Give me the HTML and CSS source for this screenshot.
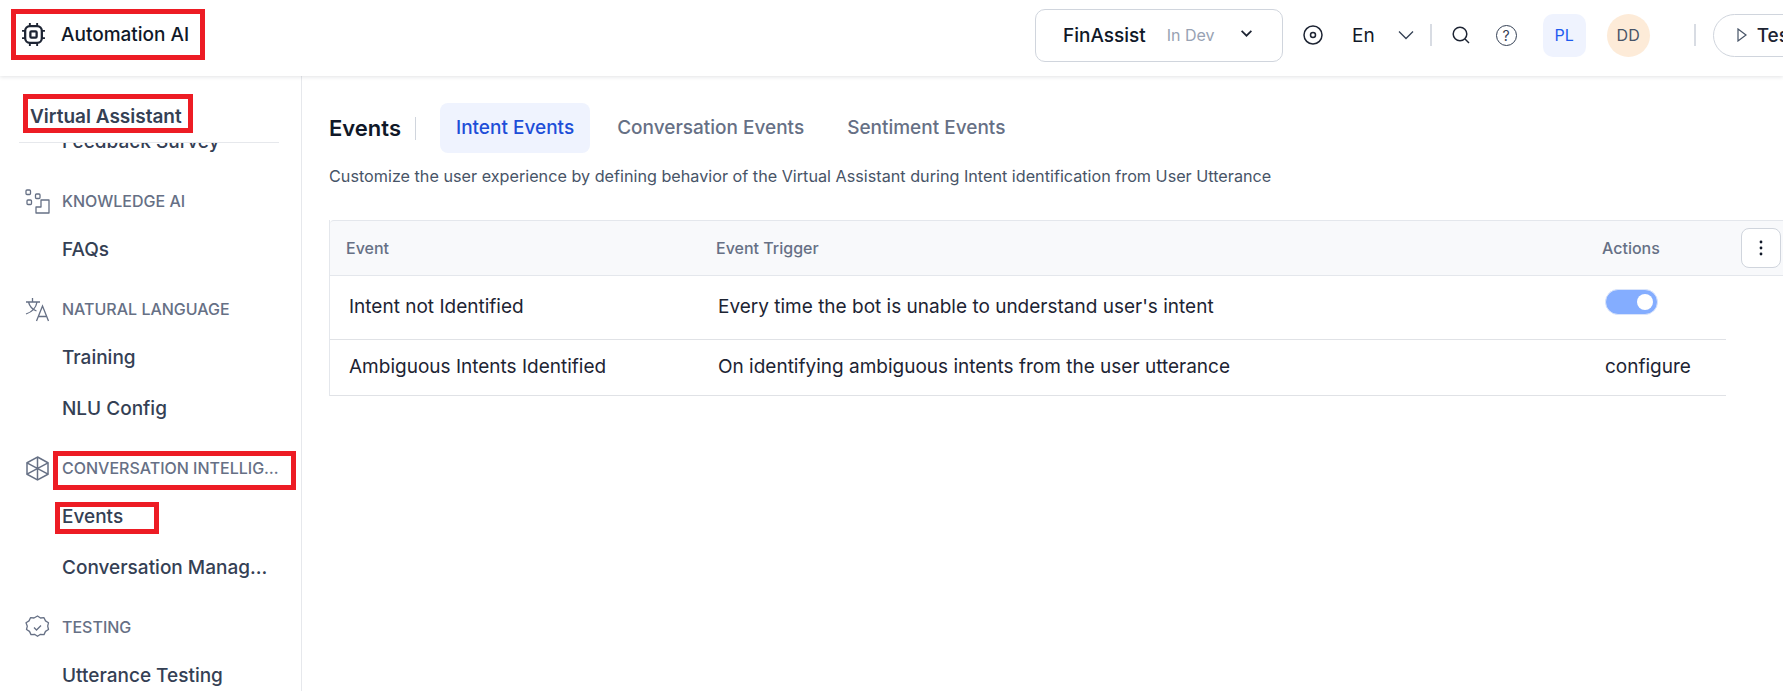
FILE: index.html
```html
<!DOCTYPE html>
<html lang="en">
<head>
    <meta charset="UTF-8">
    <meta name="viewport" content="width=device-width, initial-scale=1.0">
    <title>Automation AI - Events</title>
    <link rel="stylesheet" href="styles.css">
</head>
<body>
    <header class="topbar">
        <div class="brand">
            <svg class="brand-icon" viewBox="0 0 24 24" fill="none" stroke="#1d2433" stroke-width="2.200">
                <rect x="4" y="4" width="16" height="16" rx="4.500"/>
                <rect x="9" y="9" width="6" height="6" rx="1"/>
                <path d="M8.500 1v3M15.500 1v3M8.500 20v3M15.500 20v3M1 8.500h3M1 15.500h3M20 8.500h3M20 15.500h3" stroke-width="1.800"/>
            </svg>
            <span>Automation AI</span>
        </div>
        <div class="top-actions">
            <div class="app-select">
                <span class="app-name">FinAssist</span>
                <span class="app-state">In Dev</span>
                <svg class="chev-small" viewBox="0 0 12 8" fill="none" stroke="#1d2433" stroke-width="1.600"><path d="M1.500 1.500 6 6l4.500-4.500"/></svg>
            </div>
            <svg class="icon-disc" viewBox="0 0 20 20" fill="none" stroke="#1d2433" stroke-width="1.500">
                <circle cx="10" cy="10" r="9"/>
                <circle cx="10" cy="10" r="2.500"/>
            </svg>
            <span class="lang">En</span>
            <svg class="chev-lang" viewBox="0 0 16 10" fill="none" stroke="#344054" stroke-width="1.300"><path d="M1 1.500l7 7 7-7"/></svg>
            <span class="sep sep-lang"></span>
            <svg class="icon-search" viewBox="0 0 18 18" fill="none" stroke="#1d2433" stroke-width="1.500">
                <circle cx="8" cy="8" r="6.800"/>
                <path d="M13 13l4 4"/>
            </svg>
            <span class="icon-help">?</span>
            <span class="badge-pl">PL</span>
            <span class="badge-dd">DD</span>
            <span class="sep sep-test"></span>
            <button class="test-btn">
                <svg viewBox="0 0 10 14" fill="none" stroke="#475467" stroke-width="1.200"><path d="M1 1l8 6-8 6z"/></svg>
                Test
            </button>
        </div>
    </header>

    <div class="layout">
        <aside class="sidebar">
            <div class="side-head">Virtual Assistant</div>
            <nav class="side-nav">
                <a class="nav-item nav-first">Feedback Survey</a>

                <div class="nav-label">
                    <svg viewBox="0 0 25 25" fill="none" stroke="#667085" stroke-width="1.300">
                        <rect x="1" y="1" width="4.500" height="4.500" rx="1"/>
                        <rect x="10.500" y="5" width="4.500" height="4.500" rx="1"/>
                        <rect x="2" y="11" width="4.500" height="4.500" rx="1"/>
                        <path d="M11 24v-6h5v-7h8v13z" stroke-linejoin="round"/>
                    </svg>
                    <span>KNOWLEDGE AI</span>
                </div>
                <a class="nav-item">FAQs</a>

                <div class="nav-label">
                    <svg viewBox="0 0 25 25" fill="none" stroke="#667085" stroke-width="1.300">
                        <path d="M1 5h14M7.500 1v4M12 5c-1 6-5 10-11 12M3.500 5c1 4 4 7.500 8 9"/>
                        <path d="M11.500 24l6-15 6 15M13.500 19.500h8"/>
                    </svg>
                    <span>NATURAL LANGUAGE</span>
                </div>
                <a class="nav-item">Training</a>
                <a class="nav-item">NLU Config</a>

                <div class="nav-label">
                    <svg viewBox="0 0 25 25" fill="none" stroke="#667085" stroke-width="1.500">
                        <path d="M12.500 1l10.500 5.800v11.400L12.500 24 2 18.200V6.800z"/>
                        <path d="M12.500 1v23M2 6.800l21 11.400M23 6.800L2 18.200"/>
                    </svg>
                    <span class="nav-label-text">CONVERSATION INTELLIGENCE</span>
                </div>
                <a class="nav-item nav-active">Events</a>
                <a class="nav-item">Conversation Management</a>

                <div class="nav-label">
                    <svg viewBox="0 0 25 25" fill="none" stroke="#667085" stroke-width="1.300">
                        <path d="M12.500 1l3 2 3.500-.3 1.500 3.200 3 1.800-.8 3.500.8 3.300-3 1.900-1.500 3.200-3.500-.3-3 2-3-2-3.500.3-1.500-3.200-3-1.900.8-3.300L1 7.700l3-1.800 1.500-3.200L9 3z" stroke-linejoin="round"/>
                        <path d="M9 12.500l2.500 2.500 4.500-4.500"/>
                    </svg>
                    <span>TESTING</span>
                </div>
                <a class="nav-item">Utterance Testing</a>
            </nav>
        </aside>

        <main class="content">
            <div class="tabs-row">
                <h1 class="page-title">Events</h1>
                <span class="title-sep"></span>
                <a class="tab tab-active">Intent Events</a>
                <a class="tab">Conversation Events</a>
                <a class="tab">Sentiment Events</a>
            </div>
            <p class="page-desc">Customize the user experience by defining behavior of the Virtual Assistant during Intent identification from User Utterance</p>

            <div class="table-wrap">
                <div class="table-head">
                    <span class="col-event">Event</span>
                    <span class="col-trigger">Event Trigger</span>
                    <span class="col-actions">Actions</span>
                    <button class="more-btn">
                        <svg viewBox="0 0 4 16" fill="#101828"><circle cx="2" cy="2" r="1.400"/><circle cx="2" cy="8" r="1.400"/><circle cx="2" cy="14" r="1.400"/></svg>
                    </button>
                </div>
                <div class="table-row">
                    <span class="col-event">Intent not Identified</span>
                    <span class="col-trigger">Every time the bot is unable to understand user's intent</span>
                    <span class="col-actions"><span class="toggle"><span class="toggle-knob"></span></span></span>
                </div>
                <div class="table-row row-short">
                    <span class="col-event">Ambiguous Intents Identified</span>
                    <span class="col-trigger">On identifying ambiguous intents from the user utterance</span>
                    <span class="col-actions">configure</span>
                </div>
            </div>
        </main>
    </div>

    <!-- red highlight boxes drawn on top of the screenshot -->
    <div class="mark mark-brand"></div>
    <div class="mark mark-head"></div>
    <div class="mark mark-conv"></div>
    <div class="mark mark-events"></div>
</body>
</html>
```

FILE: styles.css
```css
html, body {
    margin: 0;
    padding: 0;
    height: 100%;
    overflow: hidden;
    background-color: white;
    font-family: Inter, "Noto Sans", sans-serif;
    color: #101828;
}

.topbar {
    height: 76px;
    box-sizing: border-box;
    padding-bottom: 6px;
    display: flex;
    align-items: center;
    background-color: white;
    box-shadow: 0 1px 4px rgba(16, 24, 40, 0.12);
    position: relative;
    z-index: 2;
}

.brand {
    width: 1035px;
    flex: none;
    display: flex;
    align-items: center;
    padding-left: 21px;
    box-sizing: border-box;
    font-size: 19px;
    font-weight: 500;
    margin-top: -2px;
}

.brand-icon {
    width: 25px;
    height: 25px;
    margin-right: 15px;
}

.top-actions {
    flex: none;
    display: flex;
    align-items: center;
}

.app-select {
    width: 248px;
    height: 53px;
    box-sizing: border-box;
    border: 1px solid #d0d5dd;
    border-radius: 10px;
    display: flex;
    align-items: center;
    padding-left: 27px;
}

.app-name {
    font-size: 19px;
    font-weight: 500;
}

.app-state {
    font-size: 16px;
    color: #98a2b3;
    margin-left: 21px;
}

.chev-small {
    width: 13px;
    height: 9px;
    margin-left: 25px;
    margin-top: -4px;
}

.icon-disc {
    width: 20px;
    height: 20px;
    margin-left: 20px;
}

.lang {
    font-size: 19px;
    margin-left: 29px;
}

.chev-lang {
    width: 16px;
    height: 10px;
    margin-left: 23px;
}

.sep {
    width: 2px;
    height: 22px;
    background-color: #d8dce3;
}

.sep-lang {
    margin-left: 16px;
}

.icon-search {
    width: 18px;
    height: 18px;
    margin-left: 20px;
}

.icon-help {
    width: 19px;
    height: 19px;
    margin-left: 26px;
    border: 1.500px solid #344054;
    border-radius: 50%;
    font-size: 14px;
    line-height: 19px;
    text-align: center;
    color: #344054;
}

.badge-pl, .badge-dd {
    width: 43px;
    height: 43px;
    display: flex;
    align-items: center;
    justify-content: center;
    font-size: 16px;
    font-weight: 400;
}

.badge-pl {
    margin-left: 26px;
    border-radius: 10px;
    background-color: #eff3fe;
    color: #1d5bf0;
}

.badge-dd {
    margin-left: 21px;
    border-radius: 50%;
    background-color: #fdebd8;
    color: #475467;
}

.sep-test {
    margin-left: 44px;
}

.test-btn {
    flex: none;
    width: 130px;
    height: 43px;
    margin-left: 17px;
    padding: 0 0 0 23px;
    box-sizing: border-box;
    border: 1px solid #d0d5dd;
    border-radius: 22px;
    background-color: white;
    display: flex;
    align-items: center;
    gap: 10px;
    font-family: inherit;
    font-size: 19px;
    font-weight: 500;
    color: #1d2433;
}

.test-btn svg {
    width: 10px;
    height: 14px;
}

.layout {
    display: flex;
    height: calc(100% - 76px);
}

.sidebar {
    width: 302px;
    flex: none;
    box-sizing: border-box;
    border-right: 1px solid #e6e8ec;
    display: flex;
    flex-direction: column;
    overflow: hidden;
}

.side-head {
    height: 67px;
    margin: 0 22px 0 19px;
    padding: 28px 0 0 11px;
    box-sizing: border-box;
    border-bottom: 1px solid #e6e8ec;
    font-size: 19px;
    line-height: 26px;
    font-weight: 600;
    color: #344054;
    background-color: white;
    position: relative;
    flex: none;
}

.side-nav {
    flex: 1;
    overflow: hidden;
}

.nav-item {
    display: block;
    height: 51px;
    line-height: 51px;
    margin-left: 62px;
    width: 206px;
    font-size: 19px;
    font-weight: 500;
    color: #344054;
    white-space: nowrap;
    overflow: hidden;
    text-overflow: ellipsis;
}

.nav-first {
    margin-top: -27px;
}

.nav-label {
    height: 46px;
    margin-top: 11px;
    padding-left: 25px;
    display: flex;
    align-items: center;
    gap: 12px;
    font-size: 16px;
    font-weight: 500;
    color: #667085;
    white-space: nowrap;
}

.nav-label svg {
    width: 25px;
    height: 25px;
    flex: none;
}

.nav-label-text {
    width: 218px;
    overflow: hidden;
    text-overflow: ellipsis;
}

.content {
    flex: 1;
    min-width: 0;
    padding: 27px 0 0 27px;
}

.tabs-row {
    display: flex;
    align-items: center;
    height: 50px;
}

.page-title {
    margin: 0;
    font-size: 22px;
    font-weight: 600;
    color: #101828;
}

.title-sep {
    width: 1px;
    height: 23px;
    margin-left: 14px;
    background-color: #d0d5dd;
}

.tab {
    height: 50px;
    line-height: 50px;
    padding: 0 16px;
    font-size: 19px;
    font-weight: 500;
    color: #667085;
    border-radius: 8px;
    margin-right: 11px;
}

.tab-active {
    margin-left: 24px;
    margin-right: 11px;
    background-color: #eff3fe;
    color: #1d4ed8;
}

.page-desc {
    margin: 11px 0 0;
    height: 25px;
    line-height: 25px;
    font-size: 16.200px;
    color: #475467;
}

.table-wrap {
    margin-top: 31px;
    border-left: 1px solid #e4e7ec;
}

.table-head {
    height: 56px;
    box-sizing: border-box;
    border-top: 1px solid #e4e7ec;
    border-bottom: 1px solid #e4e7ec;
    border-radius: 4px 0 0 0;
    background-color: #f8f9fb;
    display: flex;
    align-items: center;
    font-size: 16px;
    font-weight: 500;
    color: #667085;
    padding-left: 16px;
}

.table-head .col-event {
    width: 370px;
    flex: none;
}

.table-head .col-trigger {
    width: 886px;
    flex: none;
}

.table-head .col-actions {
    width: 139px;
    flex: none;
}

.more-btn {
    width: 40px;
    height: 40px;
    padding: 0;
    flex: none;
    border: 1px solid #d0d5dd;
    border-radius: 8px;
    background-color: white;
    display: flex;
    align-items: center;
    justify-content: center;
}

.more-btn svg {
    width: 4px;
    height: 16px;
}

.table-row {
    width: 1396px;
    height: 64px;
    box-sizing: border-box;
    border-bottom: 1px solid #e0e2e6;
    padding-bottom: 2px;
    display: flex;
    align-items: center;
    padding-left: 19px;
    font-size: 19px;
    color: #1d2433;
}

.row-short {
    height: 56px;
}

.table-row .col-event {
    width: 369px;
    flex: none;
}

.table-row .col-trigger {
    width: 887px;
    flex: none;
}

.toggle {
    display: block;
    width: 53px;
    height: 26px;
    margin-top: -10px;
    box-sizing: border-box;
    border-radius: 13px;
    background-color: #84adff;
    border: 1px solid #d9e4fb;
    position: relative;
}

.toggle-knob {
    position: absolute;
    right: 4px;
    top: 4px;
    width: 16px;
    height: 16px;
    border-radius: 50%;
    background-color: white;
}

.mark {
    position: absolute;
    box-sizing: border-box;
    border: 5px solid #ed1c24;
    z-index: 5;
}

.mark-brand {
    left: 11px;
    top: 9px;
    width: 194px;
    height: 51px;
}

.mark-head {
    left: 23px;
    top: 94px;
    width: 170px;
    height: 39px;
}

.mark-conv {
    left: 53px;
    top: 451px;
    width: 243px;
    height: 39px;
}

.mark-events {
    left: 55px;
    top: 502px;
    width: 104px;
    height: 32px;
}
```
